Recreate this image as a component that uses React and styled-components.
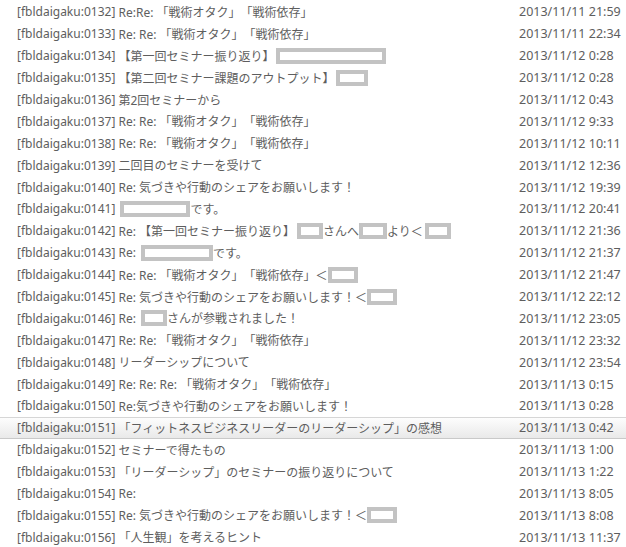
import React from "react";
import styled, { createGlobalStyle } from "styled-components";

const GlobalStyle = createGlobalStyle`
  body {
    margin: 0;
    background: #fff;
  }
`;

const List = styled.div`
  width: 626px;
  height: 547px;
  overflow: hidden;
  padding-top: 1px;
  font-family: "Noto Sans", "Noto Sans CJK JP", sans-serif;
  font-size: 12px;
  color: #5e5e5e;
  text-spacing-trim: space-all;
`;

const Row = styled.div`
  display: grid;
  grid-template-columns: 1fr 107px;
  align-items: center;
  height: 21.9px;
  box-sizing: border-box;
  padding-left: 17px;
  white-space: nowrap;

  &.selected {
    background: linear-gradient(#fdfdfd, #e9e9e9);
    border-top: 1px solid #d6d6d6;
    border-bottom: 1px solid #c9c9c9;
  }
`;

const Subject = styled.div`
  display: flex;
  align-items: center;
  overflow: hidden;
`;

const Date = styled.div`
  font-size: 12.5px;
`;

// 黒塗りの代わりのグレー枠
const Redact = styled.span`
  display: inline-block;
  width: ${(p) => p.w}px;
  height: 16px;
  box-sizing: border-box;
  border: 4px solid #c3c3c3;
  background: #fff;
  margin: 0 ${(p) => p.mr || 0}px 0 ${(p) => p.ml || 0}px;
`;

const mails = [
  { id: "0132", subject: ["Re:Re: 「戦術オタク」「戦術依存」"], date: "2013/11/11 21:59" },
  { id: "0133", subject: ["Re: Re: 「戦術オタク」「戦術依存」"], date: "2013/11/11 22:34" },
  { id: "0134", subject: ["【第一回セミナー振り返り】", { w: 110, ml: 2 }], date: "2013/11/12 0:28" },
  { id: "0135", subject: ["【第二回セミナー課題のアウトプット】", { w: 32, ml: 2 }], date: "2013/11/12 0:28" },
  { id: "0136", subject: ["第2回セミナーから"], date: "2013/11/12 0:43" },
  { id: "0137", subject: ["Re: Re: 「戦術オタク」「戦術依存」"], date: "2013/11/12 9:33" },
  { id: "0138", subject: ["Re: Re: 「戦術オタク」「戦術依存」"], date: "2013/11/12 10:11" },
  { id: "0139", subject: ["二回目のセミナーを受けて"], date: "2013/11/12 12:36" },
  { id: "0140", subject: ["Re: 気づきや行動のシェアをお願いします！"], date: "2013/11/12 19:39" },
  { id: "0141", subject: [{ w: 70, ml: 2 }, "です。"], date: "2013/11/12 20:41" },
  {
    id: "0142",
    subject: ["Re: 【第一回セミナー振り返り】", { w: 26, ml: 2 }, "さんへ", { w: 28 }, "より＜", { w: 26, ml: 2 }],
    date: "2013/11/12 21:36",
  },
  { id: "0143", subject: ["Re: ", { w: 72, ml: 2 }, "です。"], date: "2013/11/12 21:37" },
  { id: "0144", subject: ["Re: Re: 「戦術オタク」「戦術依存」＜", { w: 30 }], date: "2013/11/12 21:47" },
  { id: "0145", subject: ["Re: 気づきや行動のシェアをお願いします！＜", { w: 30 }], date: "2013/11/12 22:12" },
  { id: "0146", subject: ["Re: ", { w: 26, ml: 2 }, "さんが参戦されました！"], date: "2013/11/12 23:05" },
  { id: "0147", subject: ["Re: Re: 「戦術オタク」「戦術依存」"], date: "2013/11/12 23:32" },
  { id: "0148", subject: ["リーダーシップについて"], date: "2013/11/12 23:54" },
  { id: "0149", subject: ["Re: Re: Re: 「戦術オタク」「戦術依存」"], date: "2013/11/13 0:15" },
  { id: "0150", subject: ["Re:気づきや行動のシェアをお願いします！"], date: "2013/11/13 0:28" },
  { id: "0151", subject: ["「フィットネスビジネスリーダーのリーダーシップ」の感想"], date: "2013/11/13 0:42", selected: true },
  { id: "0152", subject: ["セミナーで得たもの"], date: "2013/11/13 1:00" },
  { id: "0153", subject: ["「リーダーシップ」のセミナーの振り返りについて"], date: "2013/11/13 1:22" },
  { id: "0154", subject: ["Re:"], date: "2013/11/13 8:05" },
  { id: "0155", subject: ["Re: 気づきや行動のシェアをお願いします！＜", { w: 30 }], date: "2013/11/13 8:08" },
  { id: "0156", subject: ["「人生観」を考えるヒント"], date: "2013/11/13 11:37" },
];

const App = () => {
  return (
    <>
      <GlobalStyle />
      <List>
        {mails.map((mail) => (
          <Row key={mail.id} className={mail.selected ? "selected" : ""}>
            <Subject>
              <span>[fbldaigaku:{mail.id}]&nbsp;</span>
              {mail.subject.map((part, i) =>
                typeof part === "string" ? (
                  <span key={i}>{part.replace(/ /g, "\u00a0")}</span>
                ) : (
                  <Redact key={i} w={part.w} ml={part.ml} mr={part.mr} />
                )
              )}
            </Subject>
            <Date>{mail.date}</Date>
          </Row>
        ))}
      </List>
    </>
  );
};

export default App;
